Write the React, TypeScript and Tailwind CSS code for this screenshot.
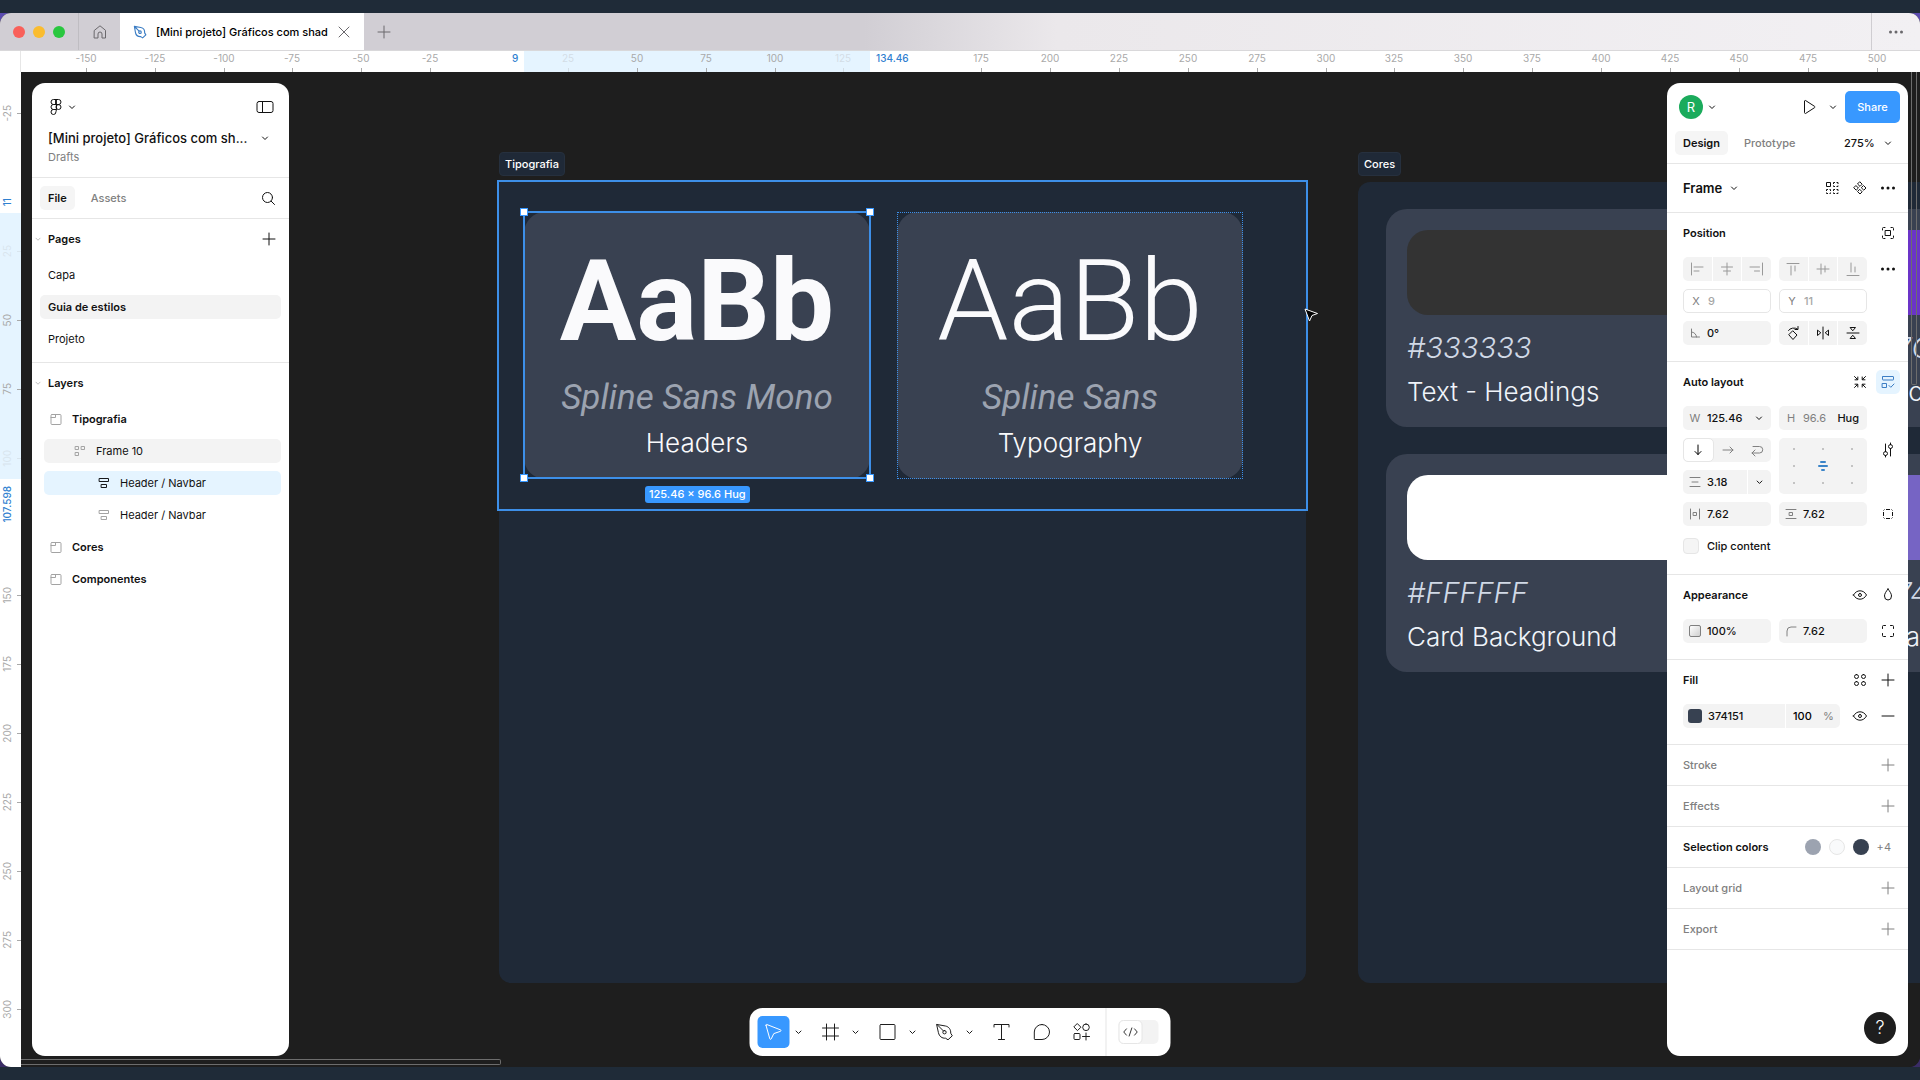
import { ReactNode } from "react";

const SCALE = 2.755;
const ORIGIN_X = 499;
const ORIGIN_Y = 110;

const ICONS = {
  chevron: "M9.5 11l2.5 2.5 2.5-2.5",
  plus: "M12 6v12M6 12h12",
  minus: "M6 12h12",
  close: "M7 7l10 10M17 7L7 17",
  home: "M6.500 10.300L12 5.800l5.500 4.500V18H14v-4a2 2 0 0 0-4 0v4H6.500z",
  figma: "M12 4.500H9.500a2.500 2.500 0 0 0 0 5H12zM12 4.500h2.500a2.500 2.500 0 0 1 0 5H12zM12 9.500H9.500a2.500 2.500 0 0 0 0 5H12zM14.500 9.500a2.500 2.500 0 1 1 0 5 2.500 2.500 0 0 1 0-5zM12 14.500H9.500a2.500 2.500 0 1 0 2.500 2.500z",
  sidebar: "M6 6.500h12a2 2 0 0 1 2 2v7a2 2 0 0 1-2 2H6a2 2 0 0 1-2-2v-7a2 2 0 0 1 2-2zM9.500 6.500v11",
  search: "M16.500 11.500a5 5 0 1 1-10 0 5 5 0 0 1 10 0zM15.200 15.200L18.500 18.500",
  play: "M7.500 6.300v11.400a.8.8 0 0 0 1.200.7l8.800-5.700a.8.8 0 0 0 0-1.400L8.700 5.600a.8.8 0 0 0-1.200.7z",
  component: "M12 6l2.200 2.200L12 10.400 9.800 8.200zM12 13.600l2.200 2.200L12 18l-2.200-2.200zM8.200 9.800l2.200 2.200-2.200 2.200L6 12zM15.800 9.800L18 12l-2.200 2.200-2.200-2.200z",
  grid: "M6.500 6.500h4v4h-4zM13.500 8V6.500H15M16.500 6.500H18V8M18 9.500v1h-1.500M15 10.500h-1.500v-1M6.500 15v-1.500H8M9.500 13.500h1V15M10.500 16.500v1h-1M8 17.500H6.500v-1M13.500 15v-1.500H15M16.500 13.500H18V15M18 16.500v1h-1.500M15 17.500h-1.500v-1",
  target: "M6.500 9V7.500a1 1 0 0 1 1-1H9M15 6.500h1.500a1 1 0 0 1 1 1V9M17.500 15v1.500a1 1 0 0 1-1 1H15M9 17.500H7.500a1 1 0 0 1-1-1V15M9.500 9.500h5v5h-5z",
  corners: "M6.500 9.500v-2a1 1 0 0 1 1-1h2M14.500 6.500h2a1 1 0 0 1 1 1v2M17.500 14.500v2a1 1 0 0 1-1 1h-2M9.500 17.500h-2a1 1 0 0 1-1-1v-2",
  sides: "M10 7.500h4M10 16.500h4M7.500 10v4M16.500 10v4M7.500 8.500l1-1M16.500 8.500l-1-1M7.500 15.500l1 1M16.500 15.500l-1 1",
  alignL: "M6.500 6v12M9 10h9M9 14h5",
  alignC: "M12 6v12M6.500 10h11M8.500 14h7",
  alignR: "M17.500 6v12M5 10h9.500M9.500 14h5",
  alignT: "M6 6.500h12M10 9v9M14 9v5",
  alignM: "M6 12h12M10 7v10M14 9v6",
  alignB: "M6 18.500h12M10 6v9M14 10v5",
  angle: "M8.500 8v8h8M8.500 11a5 5 0 0 1 5 5",
  rotate: "M12 10l4 4-4 4.500-4-4.500zM7.500 9.500a5.500 4 0 0 1 9-1.500M17 5.500V8.500h-3",
  flipH: "M12 6v12M6.500 9.500v5L9.500 12zM17.500 9.500v5L14.500 12z",
  flipV: "M6 12h12M9.500 6.500h5L12 9.500zM9.500 17.500h5L12 14.500z",
  shrink: "M6.500 6.500l3 3M9.800 7v2.800H7M17.500 6.500l-3 3M14.200 7v2.800H17M6.500 17.500l3-3M9.800 17v-2.800H7M17.500 17.500l-3-3M14.200 17v-2.800H17",
  autoLayout: "M7 6.500h10a.5.5 0 0 1 .5.5v2.500a.5.5 0 0 1-.5.5H7a.5.5 0 0 1-.5-.5V7a.5.5 0 0 1 .5-.5zM6.500 13.500h4v4h-4zM13 15.500l1.800 1.800L18 14",
  down: "M12 7v9.500M9 13.500l3 3 3-3",
  right: "M7 12h10M14 9l3 3-3 3",
  wrap: "M8 8.500h6.500a3.200 3.200 0 0 1 0 6.500H7M10 12l-3 3 3 3",
  sliders: "M9.500 6v7.500M9.500 17.500V19M14.500 18v-7.500M14.500 6.500V5M9.500 13.500a2 2 0 1 0 0 4 2 2 0 0 0 0-4zM14.500 6.500a2 2 0 1 0 0 4 2 2 0 0 0 0-4z",
  gap: "M7 7.500h10M9 12h6M7 16.500h10",
  padH: "M7.500 7v10M16.500 7v10M10.500 10.500h3v3h-3z",
  padV: "M7 7.500h10M7 16.500h10M10.500 10.500h3v3h-3z",
  eye: "M5.500 12C7 9.300 9.300 7.800 12 7.800s5 1.500 6.500 4.200c-1.500 2.700-3.800 4.200-6.500 4.200S7 14.700 5.500 12zM12 10.500a1.500 1.500 0 1 0 0 3 1.500 1.500 0 0 0 0-3z",
  drop: "M12 6c2 2.700 3.500 4.700 3.500 7a3.500 4 0 0 1-7 0c0-2.300 1.500-4.300 3.500-7z",
  radius: "M8 17v-5a4 4 0 0 1 4-4h5",
  styles: "M8.500 6.500a2 2 0 1 0 0 4 2 2 0 0 0 0-4zM15.500 6.500a2 2 0 1 0 0 4 2 2 0 0 0 0-4zM8.500 13.500a2 2 0 1 0 0 4 2 2 0 0 0 0-4zM15.500 13.500a2 2 0 1 0 0 4 2 2 0 0 0 0-4z",
  frameLayer: "M8 7.500h8a1 1 0 0 1 1 1v8a1 1 0 0 1-1 1H8a1 1 0 0 1-1-1v-8a1 1 0 0 1 1-1zM7 10.500h4.500v-3",
  wrapLayer: "M7.500 7.500h3v3h-3zM13.500 7.500h3v3h-3zM7.500 13.500h3v3h-3z",
  stackLayer: "M7.500 7.500h9v3h-9zM9.500 13.500h5v3h-5z",
  cursor: "M4.500 5.300l3.800 13.500c.2.700 1.100.7 1.400.1l2.600-5.300 6.700-2.300c.7-.2.700-1.100.1-1.400L5.300 4.500c-.5-.2-1 .2-.8.8z",
  frame: "M8 4v16M16 4v16M4 8h16M4 16h16",
  square: "M5.500 4.500h13a1 1 0 0 1 1 1v13a1 1 0 0 1-1 1h-13a1 1 0 0 1-1-1v-13a1 1 0 0 1 1-1z",
  pen: "M4.500 4.500l8.500 1.500c3.500.7 5.500 3.800 5.200 7.200l1.600 2.600-4.300 4-2.500-1.600c-3.500.2-6.200-1.700-7-5.200zM4.500 4.500l6.300 6.300M12 10.500a1.700 1.700 0 1 0 0 3.400 1.700 1.700 0 0 0 0-3.400z",
  text: "M4.500 7V4.500h15V7M12 4.500v15M9 19.500h6",
  comment: "M12.500 4.500a7.500 7.500 0 1 1 0 15H5.500a.7.7 0 0 1-.7-.7V12a7.500 7.500 0 0 1 7.700-7.500z",
  actions: "M8 3.800L11.400 7.200 8 10.600 4.600 7.200zM16.500 4a3.300 3.300 0 1 0 0 6.600 3.300 3.300 0 0 0 0-6.600zM5.500 13.500h4a1 1 0 0 1 1 1v4a1 1 0 0 1-1 1h-4a1 1 0 0 1-1-1v-4a1 1 0 0 1 1-1zM16.500 13v7M13 16.500h7",
  code: "M7.500 8.500L4.500 12l3 3.500M16.500 8.500l3 3.500-3 3.500M13.500 7.500l-3 9",
};

type IconName = keyof typeof ICONS;

function Icon({ name, className = "" }: { name: IconName; className?: string }) {
  return (
    <svg viewBox="0 0 24 24" aria-hidden="true" className={`size-6 shrink-0 fill-none stroke-current ${className}`} strokeLinejoin="round" strokeLinecap={name === "grid" || name === "sides" ? "butt" : "round"}>
      <path d={ICONS[name]} />
    </svg>
  );
}

function IconButton({ name, label, className = "" }: { name: IconName; label: string; className?: string }) {
  return (
    <button aria-label={label} className={`flex h-6 items-center justify-center rounded-[5px] ${className}`}>
      <Icon name={name} />
    </button>
  );
}

function Dots({ className = "" }: { className?: string }) {
  return (
    <button aria-label="More" className={`flex h-6 items-center justify-center ${className}`}>
      <svg viewBox="0 0 24 24" className="size-6 fill-current"><circle cx="6.500" cy="12" r="1.500" /><circle cx="12" cy="12" r="1.500" /><circle cx="17.500" cy="12" r="1.500" /></svg>
    </button>
  );
}

function TitleBar() {
  return (
    <header className="flex h-[38px] shrink-0 border-b border-[#d9d8da] bg-linear-to-r from-[#d1ced4] from-45% via-[#ebe8eb] via-55% to-[#f2f0f3] text-[#6a686c]">
      <div className="flex w-[79px] items-center gap-2 border-r border-[#bfbdc2] pl-[13px]">
        <span className="size-3 rounded-full bg-[#f9605a]" />
        <span className="size-3 rounded-full bg-[#fabc2f]" />
        <span className="size-3 rounded-full bg-[#29c73f]" />
      </div>
      <IconButton name="home" label="Home" className="h-full w-[41px]" />
      <div className="flex w-[244px] items-center bg-white pl-2">
        <Icon name="pen" className="scale-75 stroke-[1.5] text-[#3b7dc4]" />
        <span className="ml-1 w-[174px] whitespace-nowrap text-[11px] font-medium text-black">[Mini projeto] Gráficos com shad</span>
        <IconButton name="close" label="Close tab" className="ml-[2px]" />
      </div>
      <IconButton name="plus" label="New tab" className="h-full w-10" />
      <div className="flex-1" />
      <Dots className="h-full w-[49px] border-l border-[#cfcdd1]" />
    </header>
  );
}

const xMarks = [-150, -125, -100, -75, -50, -25, 25, 50, 75, 100, 125, 175, 200, 225, 250, 275, 300, 325, 350, 375, 400, 425, 450, 475, 500];
const yMarks = [-25, 25, 50, 75, 100, 150, 175, 200, 225, 250, 275, 300];
const faint = [25, 125];

function TopRuler() {
  return (
    <div className="relative h-[21px] shrink-0 overflow-hidden bg-white text-[10px] leading-[14px] text-[#a9a9a9]">
      <div className="absolute inset-y-0 left-[524px] w-[346px] bg-[#e5f4ff]" />
      <div className="absolute inset-y-0 left-0 w-[21px] border-r border-[#e6e6e6]" />
      {xMarks.map((v) => (
        <div key={v} className={`absolute inset-y-0 flex w-10 -translate-x-1/2 flex-col items-center justify-between ${faint.includes(v) ? "opacity-30" : ""}`} style={{ left: Math.round(ORIGIN_X + v * SCALE) }}>
          <span>{v}</span>
          <span className="h-1 w-px bg-[#a9a9a9]" />
        </div>
      ))}
      <span className="absolute top-0 left-[512px] font-medium text-[#2f80d0]">9</span>
      <span className="absolute top-0 left-[876px] font-medium text-[#2f80d0]">134.46</span>
    </div>
  );
}

function SideRuler() {
  return (
    <div className="relative w-[21px] shrink-0 overflow-hidden bg-white text-[10px] leading-[14px] text-[#a9a9a9]">
      <div className="absolute inset-x-0 top-[141px] h-[266px] bg-[#e5f4ff]" />
      {yMarks.map((v) => (
        <div key={v} className={`absolute inset-x-0 flex h-10 -translate-y-1/2 items-center justify-between ${v === 25 || v === 100 ? "opacity-20" : ""}`} style={{ top: Math.round(ORIGIN_Y + v * SCALE) }}>
          <span className="rotate-180 [writing-mode:vertical-rl]">{v}</span>
          <span className="h-px w-1 bg-[#a9a9a9]" />
        </div>
      ))}
      <span className="absolute top-[126px] left-0 rotate-180 font-medium text-[#2f80d0] [writing-mode:vertical-rl]">11</span>
      <span className="absolute top-[414px] left-0 rotate-180 font-medium text-[#2f80d0] [writing-mode:vertical-rl]">107.598</span>
    </div>
  );
}

function TypeCard({ font, use, weight, className }: { font: string; use: string; weight: string; className: string }) {
  return (
    <div className={`absolute top-[140px] flex h-[267px] w-[346px] flex-col items-center rounded-[21px] bg-[#394151] pt-[23px] ${className}`}>
      <p className={`font-[Roboto,sans-serif] text-[114px] leading-[132px] text-[#fafafc] ${weight}`}>AaBb</p>
      <p className="mt-2 font-[Roboto,sans-serif] text-[35px] leading-[46px] whitespace-nowrap text-[#9ca3b0] italic">{font}</p>
      <p className="mt-1 text-[26px] leading-9 font-light text-[#fafafc]">{use}</p>
    </div>
  );
}

function ColorCard({ hex, use, swatch, className }: { hex: string; use: string; swatch: string; className: string }) {
  return (
    <div className={`absolute h-[218px] w-[440px] rounded-[21px] bg-[#394151] px-[21px] pt-[21px] ${className}`}>
      <div className={`h-[85px] rounded-[21px] ${swatch}`} />
      <p className="mt-[15px] text-[29px] leading-9 font-light text-[#d1d9e6] italic">{hex}</p>
      <p className="mt-2 text-[26px] leading-9 font-light text-[#f0f4fa]">{use}</p>
    </div>
  );
}

function Handle({ className }: { className: string }) {
  return <span className={`absolute size-2 border border-[#3898ff] bg-white ${className}`} />;
}

function Artboards() {
  return (
    <div className="absolute inset-0 overflow-hidden">
      <span className="absolute top-20 left-[478px] rounded border border-[#26303e] bg-[#1f2937] px-[5px] text-[11px] leading-[22px] font-medium text-white">Tipografia</span>
      <div className="absolute top-[110px] left-[478px] h-[801px] w-[807px] rounded-xl bg-[#1f2937]" />
      <div className="absolute top-[108px] left-[476px] h-[331px] w-[811px] border-2 border-[#3d8fe8] bg-[#1f2937]" />
      <TypeCard font="Spline Sans Mono" use="Headers" weight="font-bold" className="left-[503px]" />
      <TypeCard font="Spline Sans" use="Typography" weight="font-light" className="left-[876px]" />
      <div className="absolute top-[140px] left-[876px] h-[267px] w-[346px] border border-dotted border-[#3d8fe8]" />
      <div className="absolute top-[139px] left-[502px] h-[268px] w-[348px] border-2 border-[#3d8fe8]">
        <Handle className="-top-[5px] -left-[5px]" />
        <Handle className="-top-[5px] -right-[5px]" />
        <Handle className="-bottom-[5px] -left-[5px]" />
        <Handle className="-right-[5px] -bottom-[5px]" />
      </div>
      <span className="absolute top-[414px] left-[624px] rounded-[3px] bg-[#3898ff] px-1 text-[11px] leading-[17px] font-medium text-white">125.46 × 96.6 Hug</span>

      <span className="absolute top-20 left-[1337px] rounded border border-[#26303e] bg-[#1f2937] px-[5px] text-[11px] leading-[22px] font-medium text-white">Cores</span>
      <div className="absolute top-[110px] left-[1337px] h-[801px] w-[1200px] rounded-xl bg-[#1f2937]" />
      <ColorCard hex="#333333" use="Text - Headings" swatch="bg-[#333333]" className="top-[137px] left-[1365px]" />
      <ColorCard hex="#FFFFFF" use="Card Background" swatch="bg-white" className="top-[382px] left-[1365px]" />
      <ColorCard hex="#7C3AED" use="Background" swatch="bg-[#6b34c8]" className="top-[137px] left-[1835px]" />
      <ColorCard hex="#7463C0" use="Gradient" swatch="bg-[#7664c4]" className="top-[382px] left-[1835px]" />

      <svg viewBox="0 0 16 16" className="absolute top-[235px] left-[1282px] size-4"><path d="M2 2l4.500 12 2.500-5.500L14.500 6.500z" className="fill-black stroke-white" strokeLinejoin="round" /></svg>
      <span className="absolute bottom-[2px] left-0 h-[6px] w-[480px] rounded-r-[2px] border border-l-0 border-[#6d6d6d]" />
      <span className="absolute top-0 right-[3px] h-[313px] w-[6px] rounded-b-[2px] border border-t-0 border-[#6d6d6d]" />
    </div>
  );
}

function LayerRow({ icon, name, indent, className = "" }: { icon: IconName; name: string; indent: string; className?: string }) {
  return (
    <li className="py-1 pr-2 pl-3">
      <a href="#" className={`flex h-6 items-center gap-1 rounded-[5px] ${indent} ${className}`}>
        <Icon name={icon} className={name === "Header / Navbar" && className ? "text-[#17191c]" : "text-[#a3a3a3]"} />
        {name}
      </a>
    </li>
  );
}

function LeftPanel() {
  return (
    <aside className="flex w-[257px] flex-col rounded-[13px] bg-white">
      <div className="border-b border-[#e6e6e6] pb-3">
        <div className="flex h-12 items-center pr-3 pl-3">
          <Icon name="figma" />
          <Icon name="chevron" className="-ml-2" />
          <IconButton name="sidebar" label="Minimize UI" className="ml-auto" />
        </div>
        <div className="flex h-[14px] items-center pr-3 pl-4 text-[13px] font-medium">
          <h1>[Mini projeto] Gráficos com sh...</h1>
          <IconButton name="chevron" label="File menu" className="ml-auto" />
        </div>
        <p className="mt-1 pl-4 text-[11px] leading-4 text-[#808080]">Drafts</p>
      </div>
      <div className="flex h-[41px] items-center border-b border-[#e6e6e6] pr-[9px] pl-2">
        <button className="h-6 rounded-[5px] bg-[#f5f5f5] px-2 font-semibold">File</button>
        <button className="ml-2 h-6 px-2 font-medium text-[#808080]">Assets</button>
        <IconButton name="search" label="Search" className="ml-auto" />
      </div>
      <section className="border-b border-[#e6e6e6] pb-[7px]">
        <div className="flex h-10 items-center pr-2">
          <Icon name="chevron" className="-ml-1 w-5 text-[#b3b3b3]" />
          <h2 className="font-semibold">Pages</h2>
          <IconButton name="plus" label="Add page" className="ml-auto" />
        </div>
        <ul>
          <li className="px-2 py-1"><a href="#" className="flex h-6 items-center px-2">Capa</a></li>
          <li className="px-2 py-1"><a href="#" className="flex h-6 items-center rounded-[5px] bg-[#f3f3f3] px-2 font-semibold">Guia de estilos</a></li>
          <li className="px-2 py-1"><a href="#" className="flex h-6 items-center px-2">Projeto</a></li>
        </ul>
      </section>
      <section>
        <div className="flex h-10 items-center">
          <Icon name="chevron" className="-ml-1 w-5 text-[#b3b3b3]" />
          <h2 className="font-semibold">Layers</h2>
        </div>
        <ul>
          <LayerRow icon="frameLayer" name="Tipografia" indent="pl-0" className="font-semibold" />
          <LayerRow icon="wrapLayer" name="Frame 10" indent="pl-6" className="bg-[#f3f3f3]" />
          <LayerRow icon="stackLayer" name="Header / Navbar" indent="pl-12" className="bg-[#e5f4ff]" />
          <LayerRow icon="stackLayer" name="Header / Navbar" indent="pl-12" />
          <LayerRow icon="frameLayer" name="Cores" indent="pl-0" className="font-semibold" />
          <LayerRow icon="frameLayer" name="Componentes" indent="pl-0" className="font-semibold" />
        </ul>
      </section>
    </aside>
  );
}

function Field({ label, value, icon, text, outlined, className = "", children }: { label: string; value: string; icon?: IconName; text?: string; outlined?: boolean; className?: string; children?: ReactNode }) {
  return (
    <div className={`flex h-6 w-[88px] items-center overflow-hidden rounded-[5px] ${outlined ? "border border-[#e6e6e6] text-[#a6a6a6]" : "bg-[#f3f3f3]"} ${className}`}>
      <label className="flex h-full min-w-0 flex-1 items-center">
        <span className="flex w-6 shrink-0 justify-center text-[#808080]">{icon ? <Icon name={icon} /> : text}</span>
        <input aria-label={label} defaultValue={value} className="w-full min-w-0 flex-1 bg-transparent font-medium outline-none" />
      </label>
      {children}
    </div>
  );
}

function Segments({ items, className = "" }: { items: [IconName, string][]; className?: string }) {
  return (
    <div className={`flex h-6 w-[88px] gap-px overflow-hidden rounded-[5px] ${className}`}>
      {items.map(([name, label]) => <IconButton key={name} name={name} label={label} className="flex-1 rounded-none bg-[#f3f3f3]" />)}
    </div>
  );
}

function Section({ title, tools, children }: { title: string; tools: ReactNode; children: ReactNode }) {
  return (
    <section className="border-b border-[#e6e6e6] pr-2 pb-4 pl-4">
      <div className="flex h-10 items-center gap-1">
        <h2 className="flex-1 font-semibold">{title}</h2>
        {tools}
      </div>
      <div className="flex flex-col gap-2 pt-1">{children}</div>
    </section>
  );
}

function EmptySection({ title }: { title: string }) {
  return (
    <section className="flex h-[41px] items-center justify-between border-b border-[#e6e6e6] pr-2 pl-4 text-[#808080]">
      <h2 className="font-medium">{title}</h2>
      <IconButton name="plus" label={`Add ${title}`} />
    </section>
  );
}

function RightPanel() {
  return (
    <aside className="relative flex w-[241px] flex-col rounded-[13px] bg-white">
      <div className="flex h-12 items-center pr-2 pl-3">
        <span className="flex size-6 items-center justify-center rounded-full bg-[#1bab5c] text-[13px] text-white">R</span>
        <Icon name="chevron" className="-ml-[3px]" />
        <IconButton name="play" label="Present" className="ml-auto" />
        <IconButton name="chevron" label="Present options" />
        <button className="h-8 w-[55px] rounded-[5px] bg-[#3898ff] font-medium text-white">Share</button>
      </div>
      <div className="flex h-[33px] items-start border-b border-[#e6e6e6] pr-2 pl-2">
        <button className="h-6 rounded-[5px] bg-[#f5f5f5] px-2 font-semibold">Design</button>
        <button className="ml-2 h-6 px-2 font-medium text-[#808080]">Prototype</button>
        <label className="relative ml-auto flex h-6 items-center">
          <select aria-label="Zoom" className="h-6 w-14 appearance-none bg-transparent font-medium"><option>275%</option></select>
          <Icon name="chevron" className="pointer-events-none absolute right-0" />
        </label>
      </div>
      <div className="flex h-[49px] items-center border-b border-[#e6e6e6] pr-2 pl-4">
        <h2 className="text-[13px] font-semibold">Frame</h2>
        <Icon name="chevron" />
        <div className="ml-auto flex gap-1">
          <IconButton name="grid" label="Grid" />
          <IconButton name="component" label="Create component" />
          <Dots />
        </div>
      </div>

      <Section title="Position" tools={<IconButton name="target" label="Absolute position" />}>
        <div className="flex gap-2">
          <Segments items={[["alignL", "Left"], ["alignC", "Center"], ["alignR", "Right"]]} className="text-[#999999]" />
          <Segments items={[["alignT", "Top"], ["alignM", "Middle"], ["alignB", "Bottom"]]} className="text-[#999999]" />
          <Dots className="ml-auto" />
        </div>
        <div className="flex gap-2">
          <Field label="X" text="X" value="9" outlined />
          <Field label="Y" text="Y" value="11" outlined />
        </div>
        <div className="flex gap-2">
          <Field label="Rotation" icon="angle" value="0°" />
          <Segments items={[["rotate", "Rotate"], ["flipH", "Flip horizontal"], ["flipV", "Flip vertical"]]} />
        </div>
      </Section>

      <Section title="Auto layout" tools={<><IconButton name="shrink" label="Resize to fit" /><IconButton name="autoLayout" label="Auto layout" className="bg-[#e5f4ff] text-[#3b7dc4]" /></>}>
        <div className="flex gap-2">
          <Field label="Width" text="W" value="125.46"><Icon name="chevron" /></Field>
          <Field label="Height" text="H" value="96.6" className="[&_input]:font-normal [&_input]:text-[#808080]"><span className="pr-2 font-medium">Hug</span></Field>
        </div>
        <div className="flex gap-2">
          <div className="flex flex-col gap-2">
            <div className="flex h-6 w-[88px] rounded-[5px] bg-[#f3f3f3] text-[#808080]">
              <IconButton name="down" label="Vertical" className="flex-1 border border-[#e6e6e6] bg-white text-black" />
              <IconButton name="right" label="Horizontal" className="flex-1" />
              <IconButton name="wrap" label="Wrap" className="flex-1" />
            </div>
            <Field label="Gap" icon="gap" value="3.18"><Icon name="chevron" className="border-l border-white" /></Field>
          </div>
          <div className="grid h-14 w-[88px] grid-cols-3 place-items-center rounded-[5px] bg-[#f3f3f3] py-1">
            {[0, 1, 2, 3, 4, 5, 6, 7, 8].map((i) =>
              i === 4 ? (
                <span key={i} className="flex flex-col items-center gap-0.5">
                  <span className="h-0.5 w-1.5 rounded bg-[#3b84c8]" />
                  <span className="h-0.5 w-2.5 rounded bg-[#3b84c8]" />
                  <span className="h-0.5 w-1 rounded bg-[#3b84c8]" />
                </span>
              ) : <span key={i} className="size-0.5 rounded-full bg-[#b3b3b3]" />
            )}
          </div>
          <IconButton name="sliders" label="Layout settings" className="ml-auto" />
        </div>
        <div className="flex gap-2">
          <Field label="Horizontal padding" icon="padH" value="7.62" />
          <Field label="Vertical padding" icon="padV" value="7.62" />
          <IconButton name="sides" label="Individual padding" className="ml-auto" />
        </div>
        <label className="flex h-6 items-center gap-2 font-medium">
          <input type="checkbox" className="size-4 appearance-none rounded border border-[#e6e6e6] bg-[#f5f5f5]" />
          Clip content
        </label>
      </Section>

      <Section title="Appearance" tools={<><IconButton name="eye" label="Visibility" /><IconButton name="drop" label="Blend mode" /></>}>
        <div className="flex gap-2">
          <label className="flex h-6 w-[88px] items-center gap-1.5 rounded-[5px] bg-[#f3f3f3] pl-1.5">
            <span className="size-3 shrink-0 rounded-[2px] border border-[#808080] bg-linear-to-br from-white to-[#d0d0d0]" />
            <input aria-label="Opacity" defaultValue="100%" className="w-12 bg-transparent font-medium" />
          </label>
          <Field label="Corner radius" icon="radius" value="7.62" />
          <IconButton name="corners" label="Individual corners" className="ml-auto" />
        </div>
      </Section>

      <Section title="Fill" tools={<><IconButton name="styles" label="Styles" /><IconButton name="plus" label="Add fill" /></>}>
        <div className="flex gap-1">
          <div className="mr-1 flex h-6 w-[157px] gap-px overflow-hidden rounded-[5px]">
            <label className="flex flex-1 items-center gap-1.5 bg-[#f3f3f3] pl-[5px]">
              <span className="size-3.5 shrink-0 rounded-[3px] bg-[#374151]" />
              <input aria-label="Fill color" defaultValue="374151" className="w-16 bg-transparent font-medium" />
            </label>
            <label className="flex w-[54px] items-center bg-[#f3f3f3] pl-[7px] text-[#808080]">
              <input aria-label="Fill opacity" defaultValue="100" className="w-[30px] bg-transparent font-medium text-black" />%
            </label>
          </div>
          <IconButton name="eye" label="Toggle fill" className="ml-auto" />
          <IconButton name="minus" label="Remove fill" />
        </div>
      </Section>

      <EmptySection title="Stroke" />
      <EmptySection title="Effects" />
      <section className="flex h-[41px] items-center gap-2 border-b border-[#e6e6e6] pr-[17px] pl-4">
        <h2 className="flex-1 font-semibold">Selection colors</h2>
        <span className="size-4 rounded-full bg-[#9ca3b0]" />
        <span className="size-4 rounded-full border border-[#e6e6e6] bg-[#f9fafb]" />
        <span className="size-4 rounded-full bg-[#374151]" />
        <span className="text-[#808080]">+4</span>
      </section>
      <EmptySection title="Layout grid" />
      <EmptySection title="Export" />
      <button aria-label="Help" className="absolute right-3 bottom-3 flex size-8 items-center justify-center rounded-full bg-[#1e1e1e] text-lg font-light text-white">?</button>
    </aside>
  );
}

function Tool({ name, label, active, menu }: { name: IconName; label: string; active?: boolean; menu?: boolean }) {
  return (
    <div className="flex items-center">
      <button aria-label={label} className={`flex size-8 items-center justify-center rounded-[5px] ${active ? "bg-[#3898ff] text-white" : ""}`}><Icon name={name} /></button>
      {menu && <button aria-label={`${label} options`} className="flex w-[17px] justify-center"><Icon name="chevron" /></button>}
    </div>
  );
}

function Toolbar() {
  return (
    <nav className="absolute bottom-[11px] left-1/2 flex h-12 -translate-x-1/2 rounded-[13px] bg-white text-[#1e1e1e]">
      <div className="flex items-center gap-2 border-r border-[#e6e6e6] px-2">
        <Tool name="cursor" label="Move" active menu />
        <Tool name="frame" label="Frame" menu />
        <Tool name="square" label="Rectangle" menu />
        <Tool name="pen" label="Pen" menu />
        <Tool name="text" label="Text" />
        <Tool name="comment" label="Comment" />
        <Tool name="actions" label="Actions" />
      </div>
      <div className="flex items-center px-3">
        <button aria-label="Dev mode" className="h-6 w-10 rounded-[5px] bg-[#f3f3f3]">
          <span className="flex size-6 items-center justify-center rounded-[5px] border border-[#e6e6e6] bg-white"><Icon name="code" className="scale-90" /></span>
        </button>
      </div>
    </nav>
  );
}

export default function App() {
  return (
    <div className="h-screen overflow-hidden bg-[#1f2b38] py-[13px] font-[Inter,sans-serif] text-[11px] leading-4 text-[#111111]">
      <div className="h-full bg-linear-to-b from-[#5b4bb0] to-[#3a2c66]">
        <div className="relative flex h-full flex-col overflow-hidden rounded-[11px] bg-[#1e1e1e]">
          <TitleBar />
          <TopRuler />
          <div className="flex min-h-0 flex-1">
            <SideRuler />
            <main className="relative flex min-w-0 flex-1 justify-between bg-[#1e1e1e] py-[11px] pr-3 pl-[11px]">
              <Artboards />
              <div className="relative flex"><LeftPanel /></div>
              <div className="relative flex"><RightPanel /></div>
            </main>
          </div>
          <Toolbar />
        </div>
      </div>
    </div>
  );
}
